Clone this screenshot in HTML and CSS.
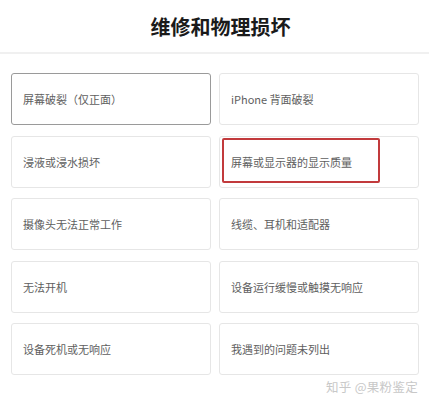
FILE: index.html
```html
<!DOCTYPE html>
<html lang="zh-CN">
<head>
<meta charset="utf-8">
<link rel="stylesheet" href="styles.css">
</head>
<body>
<div class="page">
  <header class="head"><h1 class="title">维修和物理损坏</h1></header>
  <div class="grid">
    <div class="card card-active">屏幕破裂（仅正面）</div>
    <div class="card">iPhone 背面破裂</div>
    <div class="card">浸液或浸水损坏</div>
    <div class="card card-marked">屏幕或显示器的显示质量<span class="mark"></span></div>
    <div class="card">摄像头无法正常工作</div>
    <div class="card">线缆、耳机和适配器</div>
    <div class="card">无法开机</div>
    <div class="card">设备运行缓慢或触摸无响应</div>
    <div class="card">设备死机或无响应</div>
    <div class="card">我遇到的问题未列出</div>
  </div>
  <div class="watermark">知乎 @果粉鉴定</div>
</div>
</body>
</html>
```
FILE: styles.css
```css
html, body {
  margin: 0;
  padding: 0;
  background: #fff;
}
.page {
  width: 429px;
  height: 400px;
  overflow: hidden;
  font-family: "Noto Sans CJK SC", "Noto Sans", sans-serif;
}
.head {
  height: 52px;
  border-bottom: 2px solid #f0f0f0;
  display: flex;
  align-items: center;
  justify-content: center;
}
.title {
  margin: 0;
  font-size: 20px;
  font-weight: 700;
  color: #1a1a1a;
  padding-left: 12px;
}
.grid {
  display: grid;
  grid-template-columns: 200px 200px;
  grid-auto-rows: 52px;
  column-gap: 8px;
  row-gap: 10.5px;
  padding: 19px 0 0 11px;
}
.card {
  position: relative;
  box-sizing: border-box;
  border: 1px solid #e6e6e6;
  border-radius: 3px;
  display: flex;
  align-items: center;
  padding-left: 11px;
  font-size: 11px;
  color: #5e5e5e;
}
.card-active {
  border-color: #9a9a9a;
}
.mark {
  position: absolute;
  left: 2px;
  top: 1px;
  width: 158px;
  height: 45px;
  box-sizing: border-box;
  border: 2px solid #c23a3c;
  border-radius: 2px;
}
.watermark {
  text-align: right;
  padding: 2px 11px 0 0;
  font-size: 12.5px;
  letter-spacing: 0.3px;
  color: #c8c8c8;
}
```
